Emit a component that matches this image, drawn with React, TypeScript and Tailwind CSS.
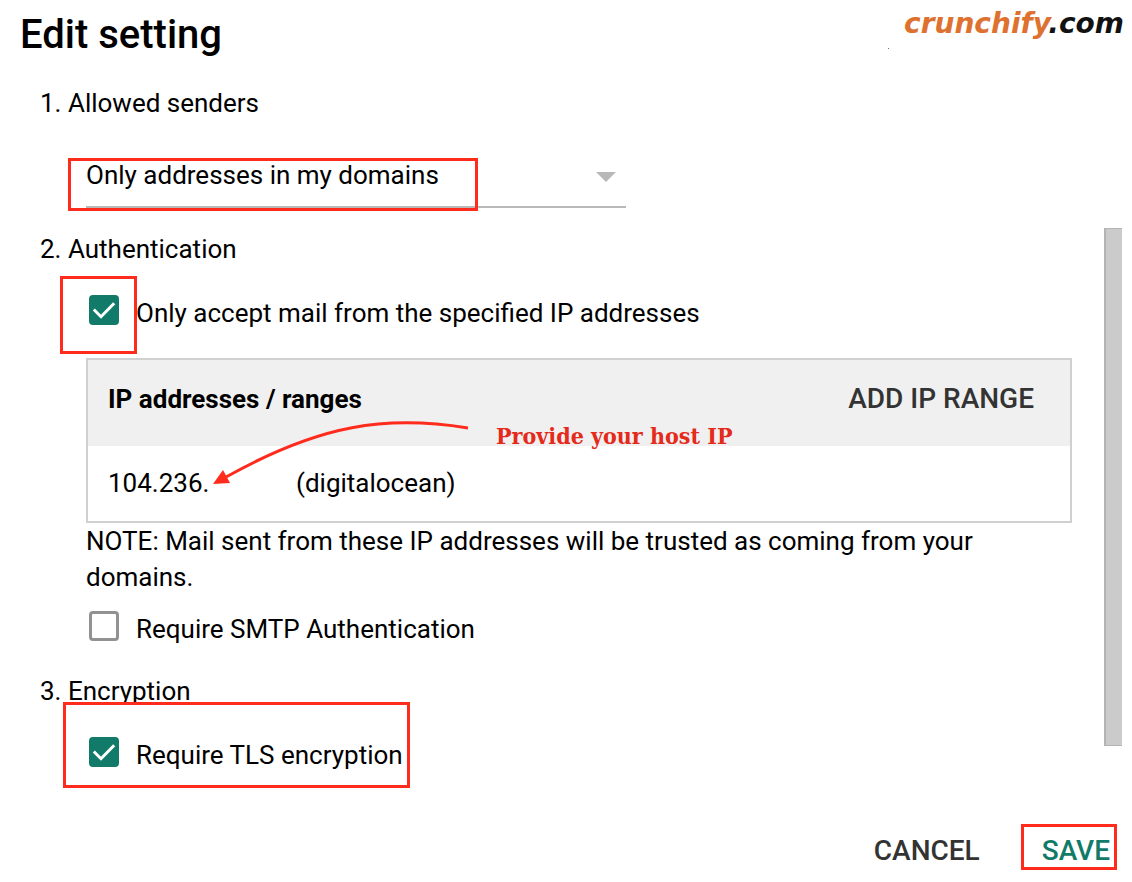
import { ReactNode } from "react";

// red frame drawn over the form to point at a setting
function Highlight({ className }: { className: string }) {
  return (
    <div
      className={`pointer-events-none absolute border-3 border-[#ff2b1c] ${className}`}
    />
  );
}

function CheckRow({
  id,
  label,
  checked = false,
  children,
}: {
  id: string;
  label: string;
  checked?: boolean;
  children?: ReactNode;
}) {
  return (
    <div className="relative flex items-start pl-[3px]">
      <span className="relative mr-[17px] size-[30px] shrink-0">
        <input
          id={id}
          type="checkbox"
          defaultChecked={checked}
          className="peer block size-[30px] appearance-none rounded-sm border-3 border-[#929292] checked:border-[#117a69] checked:bg-[#117a69]"
        />
        <svg
          viewBox="0 0 30 30"
          className="pointer-events-none absolute inset-0 hidden peer-checked:block"
          fill="none"
          stroke="#fff"
          strokeWidth="3"
        >
          <path d="M4.8 14.5L12 21.7L25.2 8.2" />
        </svg>
      </span>
      <label htmlFor={id}>{label}</label>
      {children}
    </div>
  );
}

export default function App() {
  return (
    <div className="bg-white font-['Roboto',sans-serif] text-[26px] leading-9 text-black">
      <header className="flex items-start justify-between pt-2 pr-2 pl-5">
        <h1 className="pt-[3px] text-[40px] leading-12 font-medium">
          Edit setting
        </h1>
        <a
          href="#"
          className="relative font-['DejaVu_Sans',sans-serif] text-[28px] leading-8 font-bold text-[#de7130] italic"
        >
          crunchify<span className="text-[#111]">.com</span>
          <span className="absolute top-10 -left-4 size-px bg-gray-500" />
        </a>
      </header>

      <div className="flex pt-[26px] pr-[10px]">
        <main className="min-w-0 grow pr-8 pl-10">
          <section>
            <h2>1. Allowed senders</h2>
            <div className="relative mt-9 ml-[46px] w-[540px] max-w-full">
              <select
                aria-label="Allowed senders"
                className="block h-[51px] w-full appearance-none border-b-2 border-[#b8b8b8] bg-transparent pb-[13px] leading-9"
              >
                <option>Only addresses in my domains</option>
                <option>Any addresses</option>
              </select>
              <svg
                viewBox="0 0 20 10"
                className="pointer-events-none absolute top-[15px] right-[10px] w-5"
                fill="#b8b8b8"
              >
                <path d="M0 0H20L10 10Z" />
              </svg>
              <Highlight className="top-px -left-[18px] h-[53px] w-[410px]" />
            </div>
          </section>

          <section className="mt-[23px]">
            <h2>2. Authentication</h2>
            <div className="mt-7 ml-[46px]">
              <CheckRow
                id="ip"
                label="Only accept mail from the specified IP addresses"
                checked
              >
                <Highlight className="-top-[19px] -left-[26px] h-[78px] w-[77px]" />
              </CheckRow>

              <div className="relative mt-[27px]">
                <table className="w-full border-separate border-spacing-0 border-2 border-[#d0d0d0] text-left">
                  <thead className="bg-[#f0f0f0]">
                    <tr className="h-[86px]">
                      <th className="pb-2 pl-5 font-bold">
                        IP addresses / ranges
                      </th>
                      <th className="pr-9 pb-2 text-right">
                        <button className="text-[28px] leading-9 font-medium text-[#333]">
                          ADD IP RANGE
                        </button>
                      </th>
                    </tr>
                  </thead>
                  <tbody>
                    <tr className="h-[75px]">
                      <td colSpan={2} className="pb-0.5 pl-5">
                        <span className="inline-block w-[188px]">104.236.</span>
                        (digitalocean)
                      </td>
                    </tr>
                  </tbody>
                </table>
                <svg
                  viewBox="120 55 270 80"
                  className="pointer-events-none absolute top-[55px] left-[120px] w-[270px]"
                >
                  <path
                    d="M382 70C300 57 235 66 140 119"
                    fill="none"
                    stroke="#ff2b1c"
                    strokeWidth="3"
                  />
                  <path d="M127 126L137 112L144 125Z" fill="#ff2b1c" />
                </svg>
                <span className="absolute top-[60px] left-[410px] font-['DejaVu_Serif_Condensed','DejaVu_Serif',serif] text-[23px] font-bold whitespace-nowrap text-[#e42a1a]">
                  Provide your host IP
                </span>
              </div>

              <p>
                NOTE: Mail sent from these IP addresses will be trusted as
                coming from your domains.
              </p>
              <div className="mt-4">
                <CheckRow id="smtp" label="Require SMTP Authentication" />
              </div>
            </div>
          </section>

          <section className="mt-[26px]">
            <h2>3. Encryption</h2>
            <div className="mt-7 ml-[46px]">
              <CheckRow id="tls" label="Require TLS encryption" checked>
                <Highlight className="-top-[35px] -left-[23px] h-[86px] w-[347px]" />
              </CheckRow>
            </div>
          </section>
        </main>

        {/* scrollbar thumb */}
        <div className="mt-[143px] mb-[27px] w-[18px] shrink-0 border border-r-0 border-l-2 border-[#b4b4b4] bg-[#cbcbcb]" />
      </div>

      <footer className="flex justify-end gap-[41px] pt-[51px] pr-[15px] pb-3 text-[28px] leading-8 font-medium">
        <button className="h-[46px] pt-2 text-[#333]">CANCEL</button>
        <button className="h-[46px] border-3 border-[#ff2b1c] pt-2 pr-1 pl-[18px] text-[#117a69]">
          SAVE
        </button>
      </footer>
    </div>
  );
}
